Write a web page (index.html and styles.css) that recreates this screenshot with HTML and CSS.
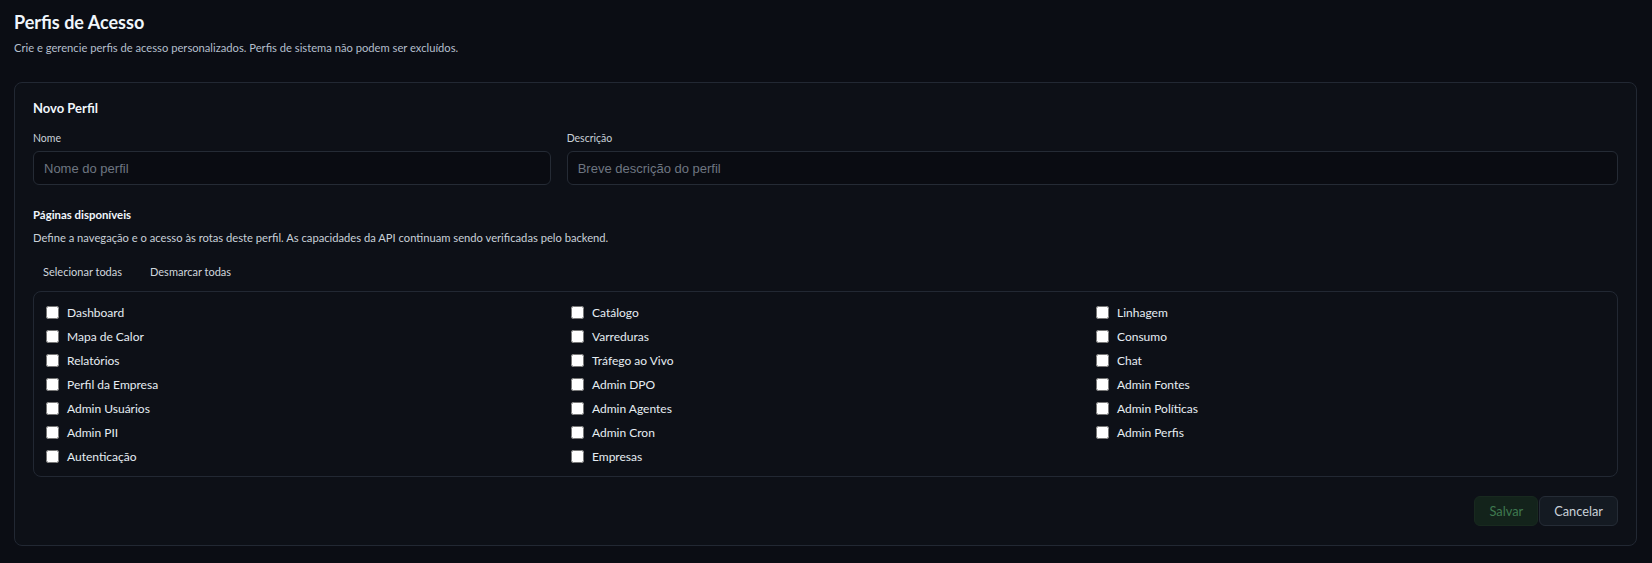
FILE: index.html
```html
<!DOCTYPE html>
<html lang="pt-BR">
<head>
<meta charset="utf-8">
<title>Perfis de Acesso</title>
<link rel="stylesheet" href="styles.css">
</head>
<body>
<main class="page">
  <header class="page-header">
    <h1 class="page-title">Perfis de Acesso</h1>
    <p class="page-subtitle">Crie e gerencie perfis de acesso personalizados. Perfis de sistema não podem ser excluídos.</p>
  </header>

  <section class="card">
    <h2 class="card-title">Novo Perfil</h2>

    <div class="field-row">
      <label class="field">
        <span class="field-label">Nome</span>
        <input class="field-input" type="text" placeholder="Nome do perfil">
      </label>
      <label class="field field-wide">
        <span class="field-label">Descrição</span>
        <input class="field-input" type="text" placeholder="Breve descrição do perfil">
      </label>
    </div>

    <h3 class="section-title">Páginas disponíveis</h3>
    <p class="section-hint">Define a navegação e o acesso às rotas deste perfil. As capacidades da API continuam sendo verificadas pelo backend.</p>

    <div class="bulk-actions">
      <button class="ghost-btn" type="button">Selecionar todas</button>
      <button class="ghost-btn" type="button">Desmarcar todas</button>
    </div>

    <div class="pages-box">
      <div class="pages-col">
        <label class="page-option"><input type="checkbox"><span>Dashboard</span></label>
        <label class="page-option"><input type="checkbox"><span>Mapa de Calor</span></label>
        <label class="page-option"><input type="checkbox"><span>Relatórios</span></label>
        <label class="page-option"><input type="checkbox"><span>Perfil da Empresa</span></label>
        <label class="page-option"><input type="checkbox"><span>Admin Usuários</span></label>
        <label class="page-option"><input type="checkbox"><span>Admin PII</span></label>
        <label class="page-option"><input type="checkbox"><span>Autenticação</span></label>
      </div>
      <div class="pages-col">
        <label class="page-option"><input type="checkbox"><span>Catálogo</span></label>
        <label class="page-option"><input type="checkbox"><span>Varreduras</span></label>
        <label class="page-option"><input type="checkbox"><span>Tráfego ao Vivo</span></label>
        <label class="page-option"><input type="checkbox"><span>Admin DPO</span></label>
        <label class="page-option"><input type="checkbox"><span>Admin Agentes</span></label>
        <label class="page-option"><input type="checkbox"><span>Admin Cron</span></label>
        <label class="page-option"><input type="checkbox"><span>Empresas</span></label>
      </div>
      <div class="pages-col">
        <label class="page-option"><input type="checkbox"><span>Linhagem</span></label>
        <label class="page-option"><input type="checkbox"><span>Consumo</span></label>
        <label class="page-option"><input type="checkbox"><span>Chat</span></label>
        <label class="page-option"><input type="checkbox"><span>Admin Fontes</span></label>
        <label class="page-option"><input type="checkbox"><span>Admin Políticas</span></label>
        <label class="page-option"><input type="checkbox"><span>Admin Perfis</span></label>
      </div>
    </div>

    <div class="form-actions">
      <button class="btn btn-save" type="button" disabled>Salvar</button>
      <button class="btn btn-cancel" type="button">Cancelar</button>
    </div>
  </section>
</main>
</body>
</html>
```

FILE: styles.css
```css
html, body {
  margin: 0;
  padding: 0;
  background: #0b0d14;
}

body {
  font-family: Lato, "Noto Sans", sans-serif;
  color: #e6edf3;
}

.page {
  padding: 8px 15px 18px 14px;
}

.page-header {
  margin-bottom: 26px;
}

.page-title {
  margin: 0;
  font-size: 18px;
  line-height: 28px;
  font-weight: 700;
  color: #f0f6fc;
}

.page-subtitle {
  margin: 4px 0 0;
  font-size: 11.2px;
  line-height: 16px;
  color: #b4bfcc;
}

.card {
  background: #0d1017;
  border: 1px solid #222833;
  border-radius: 8px;
  padding: 16px 18px 19px;
}

.card-title {
  margin: 0;
  font-size: 13px;
  line-height: 18px;
  font-weight: 700;
  color: #f0f6fc;
}

/* three-track grid: name takes one track, description the other two */
.field-row {
  display: grid;
  grid-template-columns: repeat(3, 1fr);
  gap: 16px;
  margin-top: 14px;
}

.field {
  display: flex;
  flex-direction: column;
  gap: 6px;
}

.field-wide {
  grid-column: span 2;
}

.field-label {
  font-size: 10.5px;
  line-height: 14px;
  color: #c9d1d9;
}

.field-input {
  box-sizing: border-box;
  height: 34px;
  padding: 0 10px;
  background: #0a0c12;
  border: 1px solid #252b35;
  border-radius: 6px;
  color: #e6edf3;
  font-family: "Liberation Sans", Arial, sans-serif;
  font-size: 13px;
  outline: none;
}

.field-input::placeholder {
  color: #6e7681;
}

.section-title {
  margin: 21px 0 0;
  font-size: 11.4px;
  line-height: 18px;
  font-weight: 700;
  color: #f0f6fc;
}

.section-hint {
  margin: 6px 0 0;
  font-size: 11.2px;
  line-height: 16px;
  color: #c9d1d9;
}

.bulk-actions {
  display: flex;
  gap: 8px;
  margin-top: 11px;
}

.ghost-btn {
  height: 28px;
  padding: 0 10px;
  background: transparent;
  border: none;
  border-radius: 6px;
  color: #d0d7de;
  font-family: inherit;
  font-size: 11px;
  cursor: pointer;
}

.pages-box {
  display: grid;
  grid-template-columns: repeat(3, 1fr);
  column-gap: 16px;
  margin-top: 6px;
  padding: 10px 12px;
  border: 1px solid #222833;
  border-radius: 8px;
}

.pages-col {
  display: flex;
  flex-direction: column;
  gap: 4px;
}

.page-option {
  display: flex;
  align-items: center;
  gap: 8px;
  height: 20px;
  font-size: 12px;
  color: #e6edf3;
  cursor: pointer;
}

.page-option input {
  width: 13px;
  height: 13px;
  margin: 0;
}

.form-actions {
  display: flex;
  justify-content: flex-end;
  gap: 1px;
  margin-top: 19px;
}

.btn {
  height: 30px;
  padding: 0 14px;
  border-radius: 6px;
  font-family: inherit;
  font-size: 12.8px;
}

.btn-save {
  background: #13231b;
  border: 1px solid #18291f;
  color: #3f7a50;
}

.btn-cancel {
  background: #141a22;
  border: 1px solid #252c36;
  color: #c9d1d9;
  cursor: pointer;
}
```
